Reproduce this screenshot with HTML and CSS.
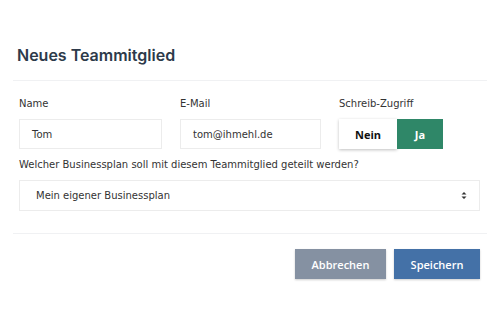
FILE: index.html
```html
<!DOCTYPE html>
<html lang="de">
<head>
<meta charset="utf-8">
<link rel="stylesheet" href="styles.css">
</head>
<body>
<div class="modal">
  <div class="modal-header">
    <h2 class="title">Neues Teammitglied</h2>
  </div>
  <div class="modal-body">
    <div class="row">
      <div class="field">
        <label class="label">Name</label>
        <div class="input">Tom</div>
      </div>
      <div class="field">
        <label class="label">E-Mail</label>
        <div class="input">tom@ihmehl.de</div>
      </div>
      <div class="field">
        <label class="label">Schreib-Zugriff</label>
        <div class="toggle">
          <span class="opt opt-no">Nein</span>
          <span class="opt opt-yes">Ja</span>
        </div>
      </div>
    </div>
    <div class="field field-wide">
      <label class="label">Welcher Businessplan soll mit diesem Teammitglied geteilt werden?</label>
      <div class="select">
        <span>Mein eigener Businessplan</span>
        <svg class="caret" width="6" height="9" viewBox="0 0 6 9"><path d="M0.5 3.5 L3 1 L5.5 3.5 Z M0.5 5.5 L3 8 L5.5 5.5 Z" fill="#333"/></svg>
      </div>
    </div>
  </div>
  <div class="modal-footer">
    <button class="btn btn-cancel">Abbrechen</button>
    <button class="btn btn-save">Speichern</button>
  </div>
</div>
</body>
</html>
```
FILE: styles.css
```css
html, body {
  margin: 0;
  padding: 0;
  background: #fff;
}
body {
  font-family: "DejaVu Sans", "Noto Sans", sans-serif;
  color: #333;
}
.modal {
  width: 500px;
  height: 330px;
  box-sizing: border-box;
  padding-top: 46px;
}
.modal-header {
  margin: 0 13px;
  padding: 0 4px 15px;
  border-bottom: 1px solid #f0f1f3;
}
.title {
  margin: 0;
  font-family: "Inter", "Open Sans", sans-serif;
  font-size: 16px;
  line-height: 19px;
  font-weight: 600;
  color: #2d3a4a;
}
.modal-body {
  padding: 16px 20px 0 19px;
}
.row {
  display: grid;
  grid-template-columns: 143px 141px 141px;
  column-gap: 18px;
}
.field {
  display: flex;
  flex-direction: column;
}
.label {
  font-size: 10px;
  line-height: 14px;
  color: #333;
  margin-bottom: 8px;
}
.input {
  height: 30px;
  box-sizing: border-box;
  border: 1px solid #ececec;
  padding: 0 12px;
  display: flex;
  align-items: center;
  font-size: 10px;
  color: #333;
}
.toggle {
  display: flex;
  height: 30px;
  width: 104px;
}
.opt {
  display: flex;
  align-items: center;
  justify-content: center;
  font-family: "Open Sans", sans-serif;
  font-size: 11px;
  font-weight: 700;
}
.opt-no {
  width: 58px;
  background: #fff;
  color: #111;
  box-shadow: 0 1px 3px rgba(0,0,0,0.25);
}
.opt-yes {
  width: 46px;
  background: #2f8768;
  color: #fff;
}
.field-wide {
  margin-top: 9px;
}
.select {
  height: 31px;
  box-sizing: border-box;
  border: 1px solid #ececec;
  padding: 0 12px 0 16px;
  display: flex;
  align-items: center;
  justify-content: space-between;
  font-size: 10px;
  color: #333;
}
.modal-footer {
  margin: 22px 13px 0;
  border-top: 1px solid #f0f1f3;
  padding: 15px 7px 0 0;
  display: flex;
  justify-content: flex-end;
  gap: 8px;
}
.btn {
  height: 30px;
  border: none;
  font-family: "Open Sans", sans-serif;
  font-size: 11px;
  font-weight: 600;
  color: #fff;
  box-shadow: 0 1px 2px rgba(0,0,0,0.2);
  padding: 0;
}
.btn-cancel {
  width: 91px;
  background: #8591a2;
}
.btn-save {
  width: 86px;
  background: #4471a7;
}
```
